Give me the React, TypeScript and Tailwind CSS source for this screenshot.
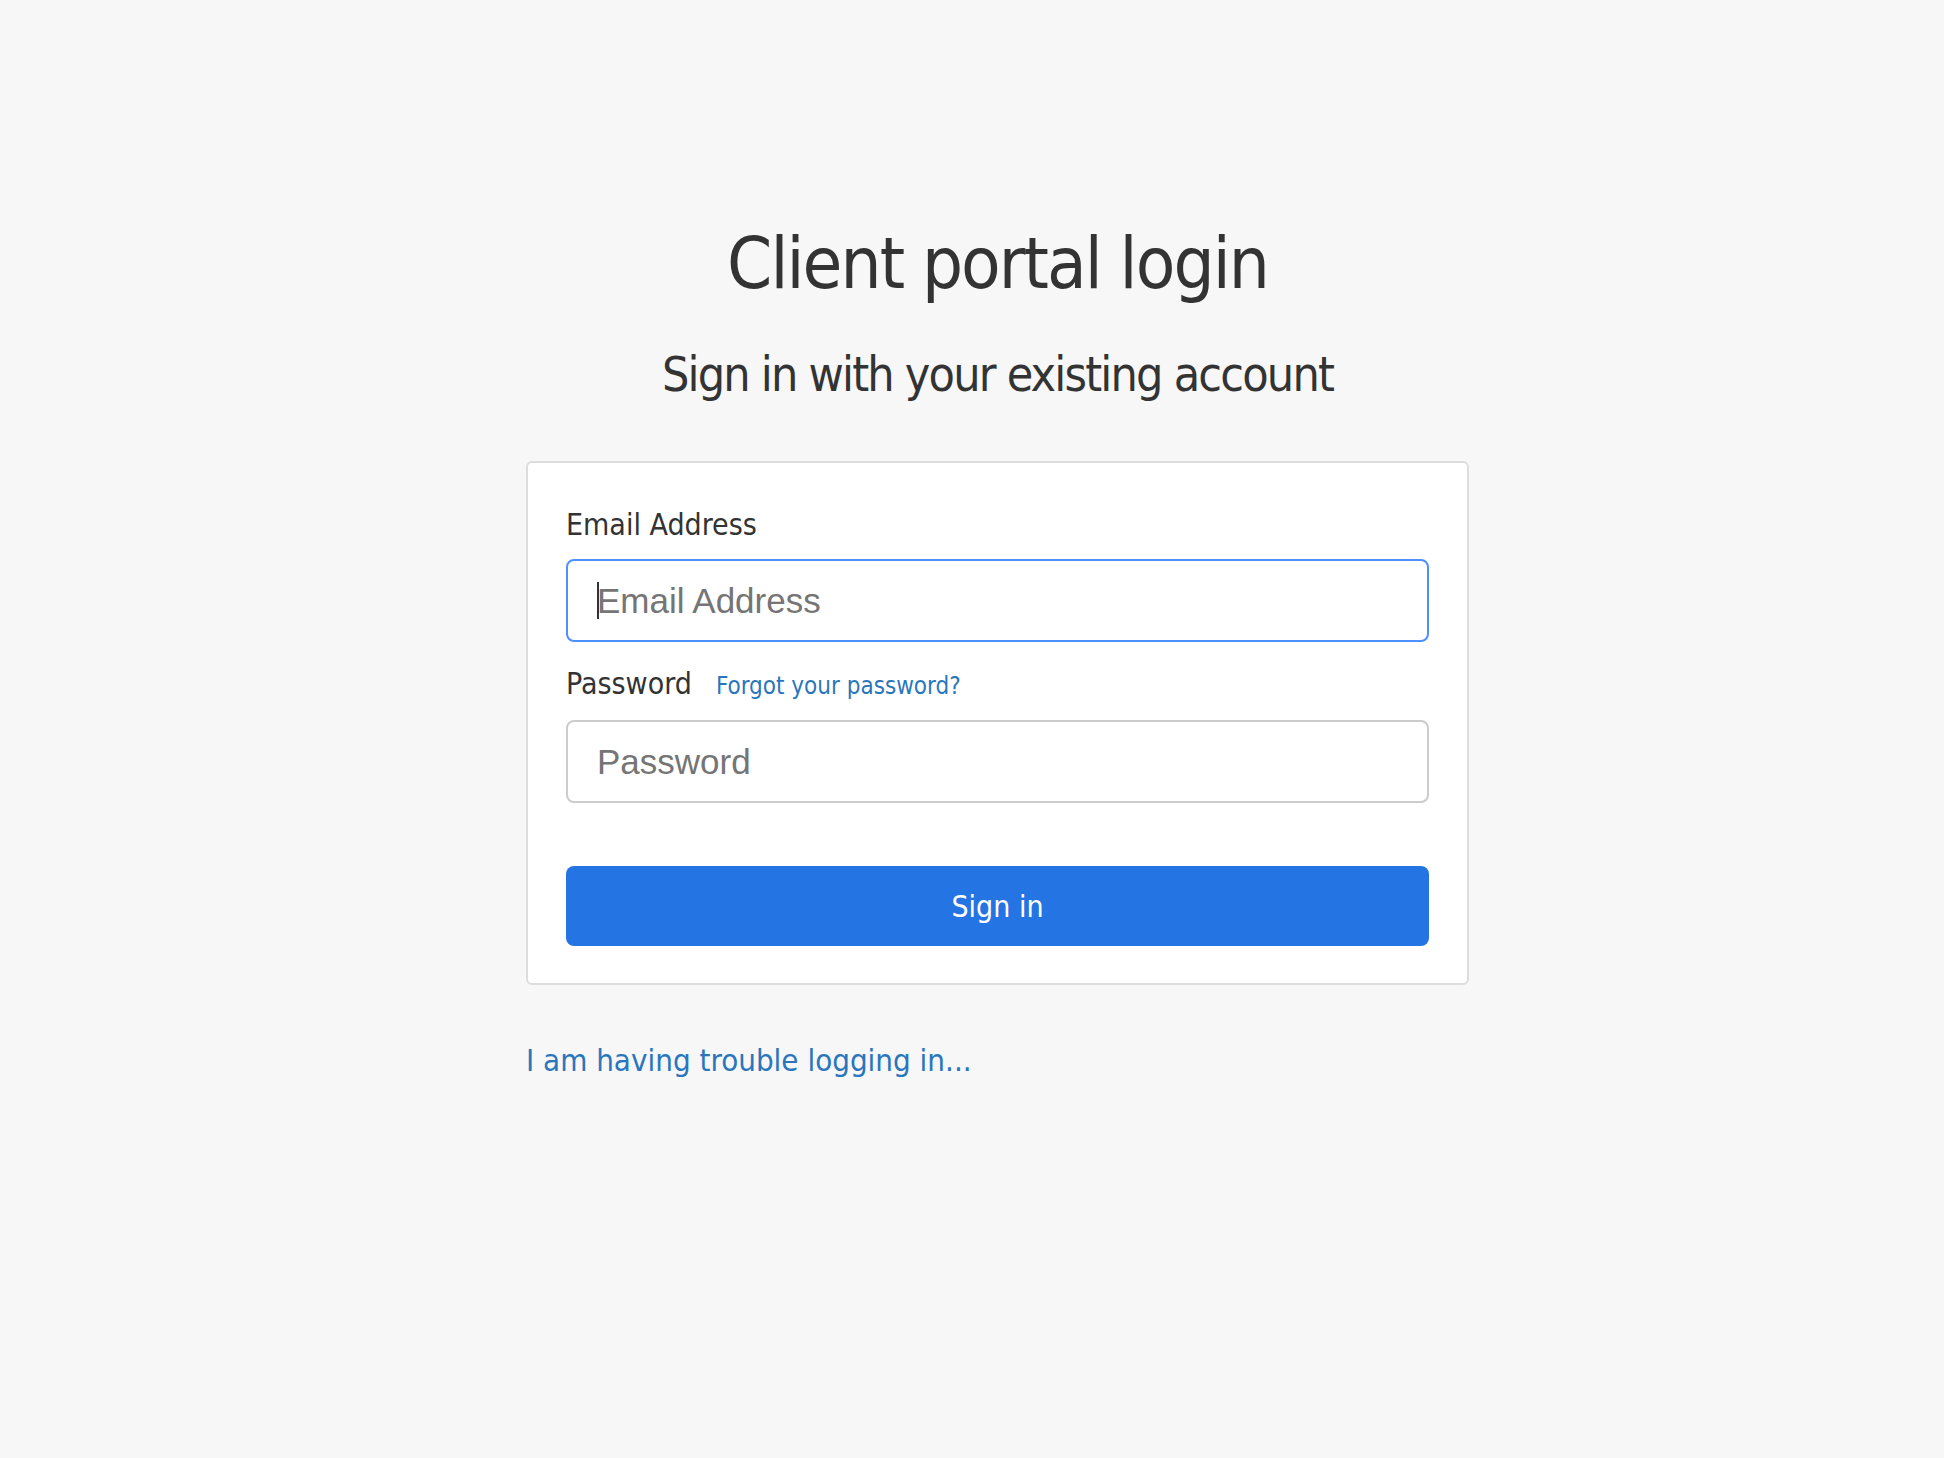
export default function App() {
  const tahoma = { fontFamily: '"DejaVu Sans Condensed", "DejaVu Sans", sans-serif' };
  const arial = { fontFamily: '"Liberation Sans", Arial, sans-serif' };
  return (
    <div className="min-h-[1458px] w-full bg-[#f7f7f7] text-[#333333]" style={tahoma}>
      <div className="ml-[526px] flex w-[943px] flex-col pt-[223px]">
        <h1 className="text-center text-[72px] leading-[80px] font-normal tracking-[-1.9px]">Client portal login</h1>
        <h2 className="mt-[43px] text-center text-[48px] leading-[56px] font-normal tracking-[-1.8px]">
          Sign in with your existing account
        </h2>
        <div className="mt-[59px] rounded-[6px] border-2 border-[#dddddd] bg-white px-[38px] pt-[44px] pb-[37px]">
          <label className="block text-[30px] leading-[36px] text-[#333333]">Email Address</label>
          <div className="relative mt-[16px]">
            <input
              type="email"
              placeholder="Email Address"
              className="block h-[83px] w-full rounded-[8px] border-2 border-[#4d90fe] bg-white px-[29px] text-[35px] text-[#555555] outline-none placeholder:text-[#757575]"
              style={arial}
            />
            <span className="pointer-events-none absolute top-[23px] left-[31px] h-[37px] w-[2px] bg-[#333333]" />
          </div>
          <div className="mt-[24px] flex items-baseline gap-[24px]">
            <label className="text-[30px] leading-[36px] text-[#333333]">Password</label>
            <a className="text-[24px] leading-[36px] text-[#2a76bd]" href="#">
              Forgot your password?
            </a>
          </div>
          <input
            type="password"
            placeholder="Password"
            className="mt-[16px] block h-[83px] w-full rounded-[8px] border-2 border-[#cccccc] bg-white px-[29px] text-[35px] text-[#555555] outline-none placeholder:text-[#757575]"
            style={arial}
          />
          <button className="mt-[63px] flex h-[80px] w-full items-center justify-center rounded-[8px] bg-[#2574e4] text-[30px] text-white">
            Sign in
          </button>
        </div>
        <a href="#" className="mt-[57px] text-[31px] leading-[36px] text-[#2a76bd]">
          I am having trouble logging in...
        </a>
      </div>
    </div>
  );
}
